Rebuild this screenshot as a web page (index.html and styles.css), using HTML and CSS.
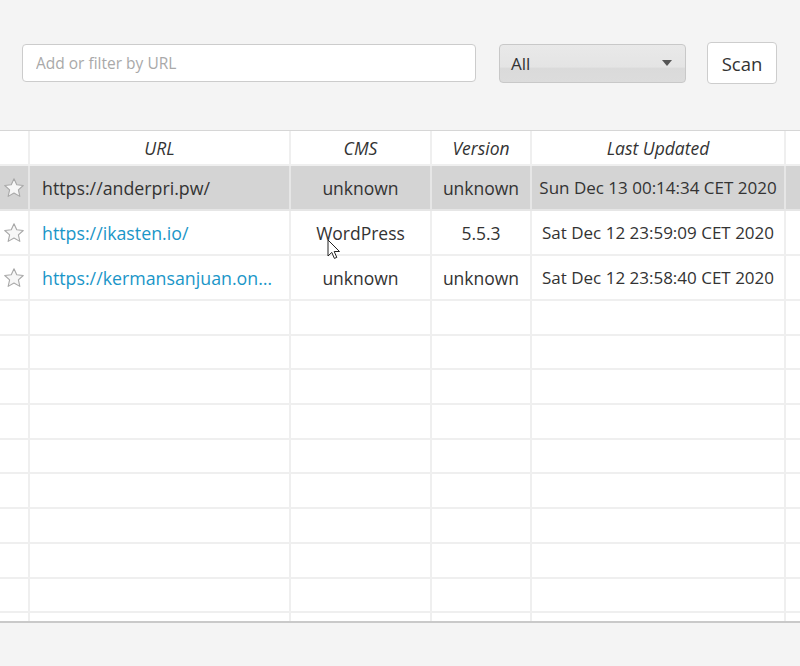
FILE: index.html
```html
<!DOCTYPE html>
<html>
<head>
<meta charset="utf-8">
<link rel="stylesheet" href="styles.css">
</head>
<body>
<div class="toolbar">
  <input class="url-input" type="text" placeholder="Add or filter by URL">
  <div class="select"><span>All</span><span class="arrow"></span></div>
  <button class="scan">Scan</button>
</div>
<div class="grid-wrap">
  <table class="grid">
    <colgroup>
      <col class="c-star"><col class="c-url"><col class="c-cms"><col class="c-ver"><col class="c-date"><col class="c-extra">
    </colgroup>
    <thead>
      <tr><th></th><th>URL</th><th>CMS</th><th>Version</th><th>Last Updated</th><th></th></tr>
    </thead>
    <tbody>
      <tr class="data selected">
        <td class="star"><svg viewBox="0 0 20 20" width="22" height="22"><path d="M10 1.6l2.5 5.5 5.9.6-4.4 4 1.3 5.9L10 14.6l-5.3 3 1.3-5.9-4.4-4 5.9-.6z" fill="#f7f7f7" stroke="#a8a8a8" stroke-width="1" stroke-linejoin="round"/></svg></td>
        <td class="url">https://anderpri.pw/</td><td>unknown</td><td>unknown</td><td class="date">Sun Dec 13 00:14:34 CET 2020</td><td></td>
      </tr>
      <tr class="data">
        <td class="star"><svg viewBox="0 0 20 20" width="22" height="22"><path d="M10 1.6l2.5 5.5 5.9.6-4.4 4 1.3 5.9L10 14.6l-5.3 3 1.3-5.9-4.4-4 5.9-.6z" fill="#f7f7f7" stroke="#a8a8a8" stroke-width="1" stroke-linejoin="round"/></svg></td>
        <td class="url link">https://ikasten.io/</td><td>WordPress</td><td>5.5.3</td><td class="date">Sat Dec 12 23:59:09 CET 2020</td><td></td>
      </tr>
      <tr class="data">
        <td class="star"><svg viewBox="0 0 20 20" width="22" height="22"><path d="M10 1.6l2.5 5.5 5.9.6-4.4 4 1.3 5.9L10 14.6l-5.3 3 1.3-5.9-4.4-4 5.9-.6z" fill="#f7f7f7" stroke="#a8a8a8" stroke-width="1" stroke-linejoin="round"/></svg></td>
        <td class="url link"><div class="ell">https://kermansanjuan.on…</div></td><td>unknown</td><td>unknown</td><td class="date">Sat Dec 12 23:58:40 CET 2020</td><td></td>
      </tr>
      <tr class="empty"><td></td><td></td><td></td><td></td><td></td><td></td></tr>
      <tr class="empty"><td></td><td></td><td></td><td></td><td></td><td></td></tr>
      <tr class="empty"><td></td><td></td><td></td><td></td><td></td><td></td></tr>
      <tr class="empty"><td></td><td></td><td></td><td></td><td></td><td></td></tr>
      <tr class="empty"><td></td><td></td><td></td><td></td><td></td><td></td></tr>
      <tr class="empty"><td></td><td></td><td></td><td></td><td></td><td></td></tr>
      <tr class="empty"><td></td><td></td><td></td><td></td><td></td><td></td></tr>
      <tr class="empty"><td></td><td></td><td></td><td></td><td></td><td></td></tr>
      <tr class="empty"><td></td><td></td><td></td><td></td><td></td><td></td></tr>
      <tr class="empty"><td></td><td></td><td></td><td></td><td></td><td></td></tr>
    </tbody>
  </table>
</div>
<svg class="cursor" width="14" height="22" viewBox="0 0 14 22"><path d="M1 1v16l3.8-3.6 2.6 6 2.4-1-2.6-5.9H12.5z" fill="#fff" stroke="#222" stroke-width="1" stroke-linejoin="round"/></svg>
</body>
</html>
```

FILE: styles.css
```css
html, body {
  margin: 0;
  padding: 0;
  background: #f4f4f4;
  font-family: "Open Sans", "Liberation Sans", sans-serif;
  color: #333;
  overflow: hidden;
  width: 800px;
  height: 666px;
}
.toolbar {
  height: 130px;
  box-sizing: border-box;
  display: flex;
  align-items: center;
  padding-left: 22px;
  padding-bottom: 4px;
}
.url-input {
  box-sizing: border-box;
  width: 454px;
  height: 38px;
  border: 1px solid #cccccc;
  border-radius: 4px;
  background: #fff;
  padding: 0 13px;
  font-family: "Open Sans", "Liberation Sans", sans-serif;
  font-size: 15.5px;
  color: #333;
  outline: none;
}
.url-input::placeholder { color: #a9a9a9; }
.select {
  box-sizing: border-box;
  margin-left: 23px;
  width: 187px;
  height: 39px;
  border: 1px solid #c8c8c8;
  border-radius: 4px;
  background: linear-gradient(#e9e9e9 0%, #e4e4e4 60%, #dadada 62%, #dcdcdc 100%);
  display: flex;
  align-items: center;
  justify-content: space-between;
  padding: 0 13px 0 11px;
  font-size: 17px;
  color: #333;
}
.select .arrow {
  width: 0;
  height: 0;
  border-left: 5px solid transparent;
  border-right: 5px solid transparent;
  border-top: 6px solid #555;
}
.scan {
  box-sizing: border-box;
  margin-left: 21px;
  width: 70px;
  height: 42px;
  border: 1px solid #cdcdcd;
  border-radius: 4px;
  background: #fff;
  font-family: "Open Sans", "Liberation Sans", sans-serif;
  font-size: 18.5px;
  color: #333;
  padding: 0;
}
.grid-wrap {
  height: 490px;
  overflow: hidden;
  background: #fff;
  border-top: 1px solid #d6d6d6;
  border-bottom: 2px solid #c9c9c9;
}
.grid {
  border-collapse: separate;
  border-spacing: 0;
  table-layout: fixed;
  width: 800px;
  font-size: 17.5px;
}
.c-star { width: 30px; }
.c-url { width: 261px; }
.c-cms { width: 141px; }
.c-ver { width: 100px; }
.c-date { width: 254px; }
.c-extra { width: 14px; }
.grid th, .grid td {
  border-right: 2px solid #efefef;
  border-bottom: 2px solid #efefef;
  padding: 0;
  text-align: center;
  white-space: nowrap;
  overflow: hidden;
}
.grid th:last-child, .grid td:last-child { border-right: none; }
.grid th {
  height: 33px;
  font-weight: normal;
  font-style: italic;
  color: #333;
}
.data td { height: 43px; color: #333; }
.grid td.date { font-size: 17px; }
.empty td { height: 32.7px; }
.selected td { background: #d4d4d4; border-bottom-color: #e6e6e6; border-right-color: #e6e6e6; }
.grid td.star { text-align: left; padding-left: 3px; }
.star svg { display: block; }
.grid td.url { text-align: left; padding-left: 12px; font-size: 17.8px; }
.link { color: #1a96c8 !important; }
.ell {
  width: 240px;
  white-space: nowrap;
}
.cursor {
  position: absolute;
  left: 327px;
  top: 239px;
}
```
